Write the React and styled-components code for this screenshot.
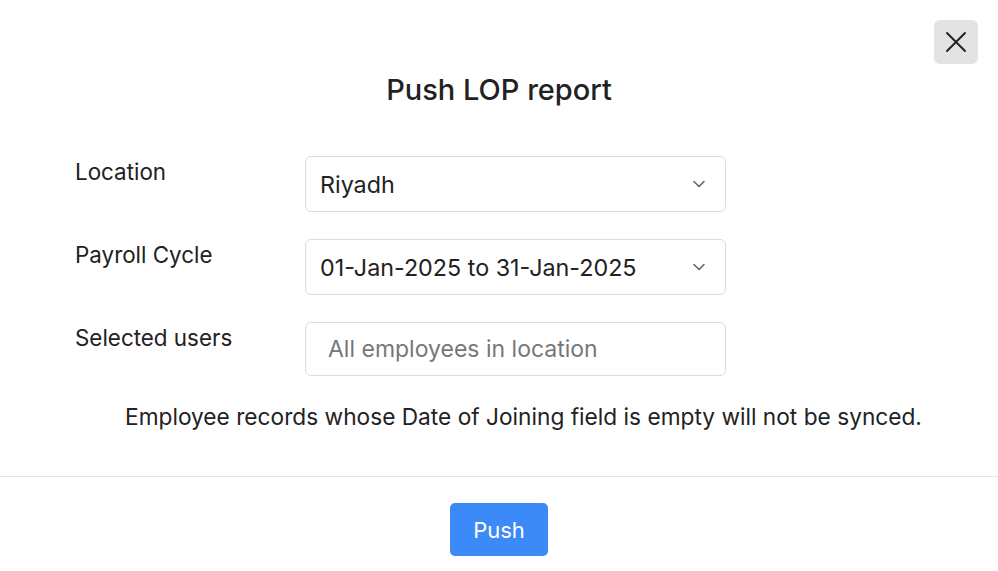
import React from "react";
import styled, { createGlobalStyle } from "styled-components";

const Global = createGlobalStyle`
  html, body { margin: 0; padding: 0; background: #fff; }
  body { font-family: Inter, "Noto Sans", sans-serif; color: #222; }
  * { box-sizing: border-box; }
`;

const Modal = styled.div`
  width: 998px;
  height: 571px;
  background: #fff;
  display: flex;
  flex-direction: column;
  position: relative;
`;

const CloseButton = styled.button`
  position: absolute;
  top: 20px;
  right: 20px;
  width: 44px;
  height: 44px;
  border: none;
  border-radius: 6px;
  background: #e3e3e3;
  display: flex;
  align-items: center;
  justify-content: center;
  padding: 0;
  cursor: pointer;
`;

const Title = styled.h2`
  margin: 72px 0 0;
  text-align: center;
  font-size: 29px;
  font-weight: 500;
  line-height: 36px;
  color: #222;
`;

const Form = styled.div`
  margin-top: 48px;
  padding-left: 75px;
  display: flex;
  flex-direction: column;
  gap: 27px;
`;

const Row = styled.div`
  display: flex;
  align-items: flex-start;
`;

const Label = styled.div`
  width: 230px;
  font-size: 22.4px;
  line-height: 30px;
  padding-top: 1px;
  color: #222;
`;

const Field = styled.div`
  width: 421px;
  height: ${({ $h }) => $h}px;
  border: 1px solid #dcdcdc;
  border-radius: 6px;
  display: flex;
  align-items: center;
  justify-content: space-between;
  padding: 0 18px 0 ${({ $pl }) => $pl}px;
  font-size: ${({ $placeholder }) => ($placeholder ? 23 : 23.3)}px;
  color: ${({ $placeholder }) => ($placeholder ? "#777" : "#222")};
`;

const Note = styled.p`
  margin: 26px 0 0;
  padding-left: 125px;
  font-size: 22.7px;
  line-height: 30px;
  color: #222;
`;

const Divider = styled.hr`
  margin: 44px 0 0;
  border: none;
  border-top: 1px solid #e2e2e2;
`;

const Footer = styled.div`
  display: flex;
  justify-content: center;
  padding-top: 26px;
`;

const PushButton = styled.button`
  width: 98px;
  height: 53px;
  border: none;
  border-radius: 5px;
  background: #3b8af7;
  color: #fff;
  font-family: inherit;
  font-size: 22px;
  cursor: pointer;
`;

const Chevron = () => (
  <svg width="16" height="16" viewBox="0 0 16 16" fill="none">
    <path d="M3 5.5l5 5 5-5" stroke="#666" strokeWidth="1.6" strokeLinecap="round" strokeLinejoin="round" />
  </svg>
);

export default function App() {
  return (
    <Modal>
      <Global />
      <CloseButton aria-label="Close">
        <svg width="22" height="22" viewBox="0 0 22 22" fill="none">
          <path d="M2 2l18 18M20 2L2 20" stroke="#222" strokeWidth="2" strokeLinecap="round" />
        </svg>
      </CloseButton>
      <Title>Push LOP report</Title>
      <Form>
        <Row>
          <Label>Location</Label>
          <Field $h={56} $pl={14}>
            Riyadh <Chevron />
          </Field>
        </Row>
        <Row>
          <Label>Payroll Cycle</Label>
          <Field $h={56} $pl={14}>
            01-Jan-2025 to 31-Jan-2025 <Chevron />
          </Field>
        </Row>
        <Row>
          <Label>Selected users</Label>
          <Field $h={54} $pl={22} $placeholder>
            All employees in location
          </Field>
        </Row>
      </Form>
      <Note>Employee records whose Date of Joining field is empty will not be synced.</Note>
      <Divider />
      <Footer>
        <PushButton>Push</PushButton>
      </Footer>
    </Modal>
  );
}
